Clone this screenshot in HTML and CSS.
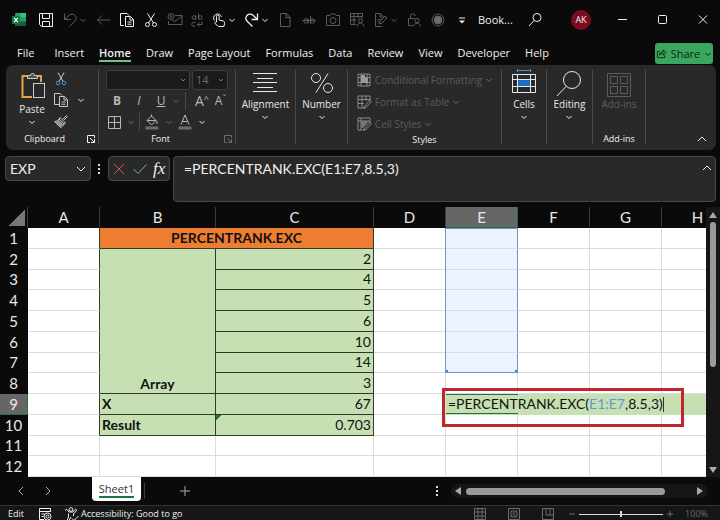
FILE: index.html
```
<!DOCTYPE html>
<html lang="en">
<head>
    <meta charset="UTF-8">
    <meta name="viewport" content="width=device-width, initial-scale=1.0">
    <title>Book - Excel</title>
    <link rel="stylesheet" href="styles.css">
</head>
<body>

    <!-- shared icon shapes -->
    <svg class="defs" aria-hidden="true">
        <symbol id="chev" viewBox="0 0 8 8"><path d="M1.500 3L4 5.500 6.500 3"/></symbol>
        <symbol id="launcher" viewBox="0 0 8 8"><path d="M7.500 3V.5H.5v7H3M3 3l4 4M7.500 4v3.500H4"/></symbol>
    </svg>

    <header class="titlebar">
        <svg class="icon logo" viewBox="0 0 16 16">
            <rect x="4" y="1" width="11" height="13" rx="1" fill="#21a366"/>
            <path d="M9.500 1H14a1 1 0 0 1 1 1v3H9.500z" fill="#33c481"/>
            <path d="M4 9.500h11V13a1 1 0 0 1-1 1H5a1 1 0 0 1-1-1z" fill="#185c37"/>
            <rect x="1" y="4" width="8" height="8" rx="1" fill="#107c41"/>
            <path d="M3.200 5.800l3.600 4.400M6.800 5.800l-3.600 4.400" stroke="#fff" stroke-width="1.200"/>
        </svg>
        <div class="quick">
            <button aria-label="Save"><svg class="icon" viewBox="0 0 16 16"><path d="M1.500 1.500h13v13H3.500l-2-2zM4.500 1.500v5h7v-5M4.500 14.500v-5h7v5"/></svg></button>
            <div class="split dim">
                <button aria-label="Undo"><svg class="icon" viewBox="0 0 16 16"><path d="M2.500 1.500v6h6M2.500 7.500L7 3.300c2-1.800 5-1.300 6.300.5 1.300 2 1 4-.5 5.500L7.500 14.500"/></svg></button>
                <button aria-label="Undo list"><svg class="chev"><use href="#chev"/></svg></button>
            </div>
            <button class="dim" aria-label="Back"><svg class="icon" viewBox="0 0 16 16"><path d="M15 8H2.500M7 3.500L2.500 8 7 12.500"/></svg></button>
            <button aria-label="Copy"><svg class="icon" viewBox="0 0 16 16"><path d="M5 13.500H1.500v-12H8l2 2M6.500 4.500h5l3 3v7h-8zM11 4.500V8h3.500M8.500 10h4M8.500 12.200h4"/></svg></button>
            <button aria-label="Cut"><svg class="icon" viewBox="0 0 16 16"><path d="M4.500 1.500l6 9.500M11.500 1.500L5.500 11"/><circle cx="4.500" cy="12.500" r="2"/><circle cx="11.500" cy="12.500" r="2"/></svg></button>
            <button class="dim" aria-label="Mail"><svg class="icon" viewBox="0 0 16 16"><path d="M8 3.500h7v9H1.500V9M5 8l3 1.500 7-5.500"/><circle cx="4" cy="4.500" r="3"/><circle cx="4" cy="4.500" r="1"/></svg></button>
            <button class="dim narrow" aria-label="Replace"><svg class="icon narrow" viewBox="0 0 12 16"><circle cx="3" cy="5.500" r="1.800"/><path d="M4.800 3.500v4M7.500 1.500v6"/><circle cx="9.300" cy="5.500" r="1.800"/><path d="M4.500 10.500H2.500a1.800 1.800 0 0 0 0 3.600h2M11 9.500v3H6.500M8.500 10.500l-2 2 2 2"/></svg></button>
            <div class="split">
                <button aria-label="Touch mode"><svg class="icon" viewBox="0 0 16 16"><path d="M3.500 8.500a4 4 0 1 1 7-3.500M5.500 10V4.500a1.300 1.300 0 0 1 2.600 0V8l4 1c1.300.3 1.600 1 1.400 2.200L13 14.500H7.500L4 11.500c-.5-1 .5-1.800 1.500-1.200"/></svg></button>
                <button aria-label="Touch mode list"><svg class="chev"><use href="#chev"/></svg></button>
            </div>
            <div class="split">
                <button aria-label="Redo"><svg class="icon" viewBox="0 0 16 16"><path stroke-width="1.300" d="M13.500 1.500v6h-6M13.500 7.500L9 3.300c-2-1.800-5-1.300-6.300.5-1.300 2-1 4 .5 5.500l5.300 5.200"/></svg></button>
                <button aria-label="Redo list"><svg class="chev"><use href="#chev"/></svg></button>
            </div>
            <button class="dim" aria-label="New"><svg class="icon" viewBox="0 0 16 16"><path d="M3.500 1.500h6l3.500 4v9H3.500zM9 1.500v4h4"/></svg></button>
            <button class="dim" aria-label="Strikethrough"><svg class="icon" viewBox="0 0 16 16"><circle cx="5" cy="9" r="2.200"/><path d="M7.200 6.500v5M9.500 4v7.500M1.500 8.500h13"/><circle cx="11.500" cy="9" r="2.200"/></svg></button>
            <button class="dim" aria-label="Camera"><svg class="icon" viewBox="0 0 16 16"><path d="M1.500 3.500H5l1-1.500h4l1 1.500h3.500v10h-13z"/><circle cx="8" cy="8.500" r="3"/></svg></button>
            <button class="dim" aria-label="Share table"><svg class="icon" viewBox="0 0 16 16"><path d="M7 12.500H1.500v-11h12v4M1.500 4.500h12M1.500 8h6M5 1.500v11M9 1.500V6"/><circle cx="11.500" cy="8.500" r="2"/><path d="M8 14.500c0-4.500 7-4.500 7 0"/></svg></button>
            <div class="split dim">
                <button aria-label="Edit file"><svg class="icon" viewBox="0 0 16 16"><path d="M9 14.500H2.500v-13h5l3 3M7 1.500v3.500h3M6 12l1-3 5-5 2 2-5 5zM4.500 7.500h3M4.500 9.500h1"/></svg></button>
                <button aria-label="Edit file list"><svg class="chev"><use href="#chev"/></svg></button>
            </div>
            <button class="dim" aria-label="Permissions"><svg class="icon" viewBox="0 0 16 16"><path d="M6.500 13.500h-4v-7h6M4.500 6.500V4a2.300 2.300 0 0 1 4.600 0"/><circle cx="11" cy="8.500" r="2.200"/><path d="M7.500 14.500c0-4.500 7-4.500 7 0"/></svg></button>
            <button class="dim" aria-label="Record"><svg class="icon" viewBox="0 0 16 16"><circle cx="8" cy="8" r="6"/><circle cx="8" cy="8" r="4" fill="#6d6d6d"/></svg></button>
            <button aria-label="Customize toolbar"><svg class="icon" viewBox="0 0 16 16"><path d="M5 6h6"/><path d="M5 8.500h6L8 11.500z" fill="#eee" stroke="none"/></svg></button>
        </div>
        <span class="doc">Book...</span>
        <div class="window">
            <button aria-label="Search"><svg class="icon" viewBox="0 0 16 16"><circle cx="10" cy="5.500" r="4"/><path d="M7 8.500L2 14"/></svg></button>
            <button class="avatar">AK</button>
            <button aria-label="Minimize"><svg class="icon" viewBox="0 0 16 16"><path d="M3 7.500h9"/></svg></button>
            <button aria-label="Maximize"><svg class="icon" viewBox="0 0 16 16"><rect x="3.500" y="3.500" width="8" height="8" rx="1"/></svg></button>
            <button aria-label="Close"><svg class="icon" viewBox="0 0 16 16"><path d="M4 3.500l8 8M12 3.500l-8 8"/></svg></button>
        </div>
    </header>

    <nav class="menu">
        <a href="#" class="file">File</a>
        <a href="#">Insert</a>
        <a href="#" class="active">Home</a>
        <a href="#">Draw</a>
        <a href="#">Page Layout</a>
        <a href="#">Formulas</a>
        <a href="#">Data</a>
        <a href="#">Review</a>
        <a href="#">View</a>
        <a href="#">Developer</a>
        <a href="#">Help</a>
        <button class="share">
            <svg viewBox="0 0 12 12"><path d="M4 4H1.500v6.500h8V8M3.500 8c.5-3 2-4 4.500-4V2l3 3-3 3V6C6 6 4.500 6.500 3.500 8z"/></svg>
            Share
            <svg class="chev"><use href="#chev"/></svg>
        </button>
    </nav>

    <section class="ribbon">
        <div class="group clipboard">
            <div class="tools">
                <button class="big">
                    <svg class="large" viewBox="0 0 26 28">
                        <path d="M8 4H3.500v21H13M18 4h4v6" stroke="#e8a33d" stroke-width="2"/>
                        <path d="M8.500 6.500V3.500h3a2 2 0 0 1 4 0h3v3z" fill="#555" stroke="#ccc"/>
                        <rect x="14.500" y="11.500" width="11" height="14" fill="#292929" stroke="#ccc"/>
                    </svg>
                    Paste
                    <svg class="chev"><use href="#chev"/></svg>
                </button>
                <div class="stack">
                    <button aria-label="Cut"><svg class="icon" viewBox="0 0 16 16"><path d="M5 1.500l5 9M11 1.500l-5 9"/><circle cx="5" cy="12" r="1.800" stroke="#3a96dd"/><circle cx="11" cy="12" r="1.800" stroke="#3a96dd"/></svg></button>
                    <div class="split wide">
                        <button aria-label="Copy"><svg class="icon" viewBox="0 0 16 16"><path d="M6 12.500H1.500v-11H7l2 2M6.500 4.500h5l3 3v7h-8zM11 4.500V8h3.500M8.500 10h4M8.500 12.200h4"/></svg></button>
                        <button aria-label="Copy list"><svg class="chev"><use href="#chev"/></svg></button>
                    </div>
                    <button aria-label="Format painter"><svg class="icon" viewBox="0 0 16 16"><path d="M10 6l3.500-3.500 1 1L11 7M7 4.500l5.500 5.500-1.500 1L6 6zM6 6C5 7.500 3.500 8.500 1.500 8.500l6 6c1.500-.5 3-2 3.500-3.500"/><path d="M2.500 9l3-2 5 4.500-3 2.500z" fill="#999" stroke="none"/></svg></button>
                </div>
            </div>
            <div class="caption">Clipboard<svg class="launcher"><use href="#launcher"/></svg></div>
        </div>

        <div class="group font">
            <div class="tools rows">
                <div class="row selects">
                    <select class="family" aria-label="Font"><option></option></select>
                    <select class="size" aria-label="Font size"><option>14</option></select>
                </div>
                <div class="row letters">
                    <button><b>B</b></button>
                    <button><i>I</i></button>
                    <button><u>U</u></button>
                    <button class="list" aria-label="Underline list"><svg class="chev faint"><use href="#chev"/></svg></button>
                    <span class="bar"></span>
                    <button class="grow">A<sup>^</sup></button>
                    <button class="shrink">A<sup>ˇ</sup></button>
                </div>
                <div class="row colors">
                    <div class="split wide"><button aria-label="Borders"><svg class="icon" viewBox="0 0 16 16"><path d="M2.500 2.500h12v12h-12zM8.500 2.500v12M2.500 8.500h12"/></svg></button><button aria-label="Borders list"><svg class="chev faint"><use href="#chev"/></svg></button></div>
                    <span class="bar"></span>
                    <div class="split wide"><button aria-label="Fill color"><svg class="icon" viewBox="0 0 16 16"><path d="M3 6.500l4.500-4.500 4.500 4.500L7.500 11zM7.500 2V.5M3.500 6.500h8M13 7v3"/><path d="M1.500 12.500h13v3h-13z" fill="#6d6d6d" stroke="none"/></svg></button><button aria-label="Fill list"><svg class="chev faint"><use href="#chev"/></svg></button></div>
                    <div class="split wide"><button aria-label="Font color"><svg class="icon" viewBox="0 0 16 16"><path d="M4 10.500L8 1l4 9.500M5.500 7.500h5"/><path d="M1.500 12.500h13v3h-13z" fill="#6d6d6d" stroke="none"/></svg></button><button aria-label="Font color list"><svg class="chev"><use href="#chev"/></svg></button></div>
                </div>
            </div>
            <div class="caption">Font<svg class="launcher faint"><use href="#launcher"/></svg></div>
        </div>

        <div class="group alignment">
            <button class="big">
                <svg class="large" viewBox="0 0 26 28"><path d="M1 4.500h24M5 9.500h16M1 13.500h24M5 18.500h16M1 22.500h24"/></svg>
                Alignment
                <svg class="chev"><use href="#chev"/></svg>
            </button>
        </div>

        <div class="group number">
            <button class="big">
                <svg class="large" viewBox="0 0 26 28"><circle cx="7" cy="9" r="4.500"/><circle cx="19" cy="19" r="4.500"/><path d="M19 4.500L7 23.500"/></svg>
                Number
                <svg class="chev"><use href="#chev"/></svg>
            </button>
        </div>

        <div class="group styles">
            <div class="tools rows">
                <button class="style">
                    <svg class="icon" viewBox="0 0 16 16"><path d="M2 2h12v12H2zM2 5.500h12M2 10.500h12M5 2v12M11 2v12"/><path d="M5 3h4v3h3v5H5z" fill="#999" stroke="none"/></svg>
                    Conditional Formatting
                    <svg class="chev"><use href="#chev"/></svg>
                </button>
                <button class="style">
                    <svg class="icon" viewBox="0 0 16 16"><path d="M9 14H2V2h12v4M2 5.500h12M2 9.500h6M6 2v12M10 2v5M8 13l6-7 1.500 1.500-6 6.500H8z"/></svg>
                    Format as Table
                    <svg class="chev"><use href="#chev"/></svg>
                </button>
                <button class="style">
                    <svg class="icon" viewBox="0 0 16 16"><path d="M9 14H2V2h12v4M2 5h12M5 2v12"/><path d="M5 5h8l-6 7H5z" fill="#777" stroke="none"/><path d="M8 13l6-7 1.500 1.500-6 6.500H8z"/></svg>
                    Cell Styles
                    <svg class="chev"><use href="#chev"/></svg>
                </button>
            </div>
            <div class="caption">Styles</div>
        </div>

        <div class="group cells">
            <button class="big">
                <svg class="large" viewBox="0 0 26 28">
                    <path d="M6.500 1.500h13M6.500 0v3M19.500 0v3" stroke="#3a96dd"/>
                    <path d="M7 11h12v6H7z" fill="#1a6fc4" stroke="none"/>
                    <path d="M1.500 5.500h23v18h-23zM1.500 10.500h23M1.500 17.500h23M6.500 5.500v18M19.500 5.500v18"/>
                </svg>
                Cells
                <svg class="chev"><use href="#chev"/></svg>
            </button>
        </div>

        <div class="group editing">
            <button class="big">
                <svg class="large" viewBox="0 0 26 28"><circle cx="16" cy="11" r="8.500"/><path d="M10 17.500L1 27"/></svg>
                Editing
                <svg class="chev"><use href="#chev"/></svg>
            </button>
        </div>

        <div class="group addins">
            <button class="big off">
                <svg class="large" viewBox="0 0 26 28"><path d="M1.500 4.500h23v23h-23zM4.500 7.500h7v7h-7zM14.500 7.500h7v7h-7zM4.500 17.500h7v7h-7zM14.500 17.500h7v7h-7z"/></svg>
                Add-ins
            </button>
            <div class="caption">Add-ins</div>
        </div>

        <button class="collapse" aria-label="Collapse ribbon"><svg class="up" viewBox="0 0 10 8"><path d="M1 6l4-4 4 4"/></svg></button>
    </section>

    <section class="formula-bar">
        <div class="name-box">
            <input type="text" value="EXP" aria-label="Name box">
            <svg class="up" viewBox="0 0 10 8"><path d="M1 2l4 4 4-4"/></svg>
        </div>
        <span class="dots"></span>
        <div class="actions">
            <button aria-label="Cancel"><svg class="icon" viewBox="0 0 16 16"><path d="M3 3l10 10M13 3L3 13" stroke="#d9544f"/></svg></button>
            <button aria-label="Enter"><svg class="icon" viewBox="0 0 16 16"><path d="M1.500 8l4.500 4.500 8.500-9" stroke="#5fc27e"/></svg></button>
            <button class="fx" aria-label="Insert function">fx</button>
        </div>
        <div class="formula">
            <textarea aria-label="Formula bar">=PERCENTRANK.EXC(E1:E7,8.5,3)</textarea>
            <button aria-label="Collapse formula bar"><svg class="up" viewBox="0 0 10 8"><path d="M1 6l4-4 4 4"/></svg></button>
        </div>
    </section>

    <main class="sheet">
        <div class="grid">
            <table>
                <colgroup>
                    <col class="rownum"><col class="std"><col class="col-b"><col class="col-c"><col class="std"><col class="std"><col class="std"><col class="std"><col class="std">
                </colgroup>
                <thead>
                    <tr><th class="corner"></th><th>A</th><th>B</th><th>C</th><th>D</th><th class="current">E</th><th>F</th><th>G</th><th>H</th></tr>
                </thead>
                <tbody>
                    <tr><th>1</th><td></td><td class="title" colspan="2">PERCENTRANK.EXC</td><td></td><td class="range top"></td><td></td><td></td><td></td></tr>
                    <tr><th>2</th><td></td><td class="data array" rowspan="7">Array</td><td class="data num">2</td><td></td><td class="range"></td><td></td><td></td><td></td></tr>
                    <tr><th>3</th><td></td><td class="data num">4</td><td></td><td class="range"></td><td></td><td></td><td></td></tr>
                    <tr><th>4</th><td></td><td class="data num">5</td><td></td><td class="range"></td><td></td><td></td><td></td></tr>
                    <tr><th>5</th><td></td><td class="data num">6</td><td></td><td class="range"></td><td></td><td></td><td></td></tr>
                    <tr><th>6</th><td></td><td class="data num">10</td><td></td><td class="range"></td><td></td><td></td><td></td></tr>
                    <tr><th>7</th><td></td><td class="data num">14</td><td></td><td class="range bottom"></td><td></td><td></td><td></td></tr>
                    <tr><th>8</th><td></td><td class="data num">3</td><td></td><td></td><td></td><td></td><td></td></tr>
                    <tr><th class="current">9</th><td></td><td class="data name">X</td><td class="data num">67</td><td></td><td class="editing-cell" colspan="4">=PERCENTRANK.EXC(<span class="ref">E1:E7</span>,8.5,3)<span class="caret"></span><span class="marker"></span></td></tr>
                    <tr><th>10</th><td></td><td class="data name">Result</td><td class="data num flag">0.703</td><td></td><td></td><td></td><td></td><td></td></tr>
                    <tr><th>11</th><td></td><td></td><td></td><td></td><td></td><td></td><td></td><td></td></tr>
                    <tr><th>12</th><td></td><td></td><td></td><td></td><td></td><td></td><td></td><td></td></tr>
                </tbody>
            </table>
        </div>
        <div class="vscroll">
            <svg viewBox="0 0 8 8"><path d="M4 1l4 6H0z"/></svg>
            <span class="vthumb"></span>
            <svg viewBox="0 0 8 8"><path d="M4 7l4-6H0z"/></svg>
        </div>
    </main>

    <div class="tabs">
        <button aria-label="Previous sheet"><svg viewBox="0 0 10 10"><path d="M7 1L3 5l4 4"/></svg></button>
        <button aria-label="Next sheet"><svg viewBox="0 0 10 10"><path d="M3 1l4 4-4 4"/></svg></button>
        <button class="tab"><span>Sheet1</span></button>
        <span class="tab-end"></span>
        <button class="add" aria-label="New sheet"><svg viewBox="0 0 10 10"><path d="M5 0v10M0 5h10"/></svg></button>
        <span class="dots"></span>
        <div class="hscroll">
            <svg viewBox="0 0 8 8"><path d="M1 4l6-4v8z"/></svg>
            <span class="hthumb"></span>
            <svg viewBox="0 0 8 8"><path d="M7 4L1 0v8z"/></svg>
        </div>
    </div>

    <footer class="status">
        <span class="mode">Edit</span>
        <svg class="icon" viewBox="0 0 16 16"><path d="M7 13.500H2.500v-11h11V6M2.500 5.500h11M4.500 8h3M4.500 10.500h2"/><circle cx="10.500" cy="10.500" r="3.500"/><circle cx="10.500" cy="10.500" r="1.500"/></svg>
        <button class="access">
            <svg class="icon" viewBox="0 0 16 16"><circle cx="6" cy="3.500" r="1.800"/><path d="M.5 4.500c0-1.500 1.500-1.500 2-.5l1.500 2h4l1.500-2c.5-1 2-1 2 .5L8.500 8v2M3.500 7.500V11L2 14.500h2l2-3.500M7 12.500l2 2 4.500-4.500"/></svg>
            Accessibility: Good to go
        </button>
        <div class="views">
            <button aria-label="Normal view"><svg viewBox="0 0 12 12"><path d="M.5.5h11v11H.5zM.5 4h11M.5 8h11M4 .5v11M8 .5v11"/></svg></button>
            <button aria-label="Page layout view"><svg viewBox="0 0 12 12"><path d="M.5.5h11v11H.5zM3 3h6v6H3zM4.500 5h3M4.500 7h3"/></svg></button>
            <button aria-label="Page break view"><svg viewBox="0 0 12 12"><path d="M.5.5h11v11H.5zM4 .5V7h4V.5M8 7h3.500"/></svg></button>
        </div>
        <div class="zoom">
            <button aria-label="Zoom out"><svg viewBox="0 0 8 8"><path d="M1 4h6"/></svg></button>
            <input type="range" min="10" max="190" value="100" aria-label="Zoom">
            <button aria-label="Zoom in"><svg viewBox="0 0 8 8"><path d="M1 4h6M4 1v6"/></svg></button>
            <span>100%</span>
        </div>
    </footer>

</body>
</html>
```
FILE: styles.css
```
* {
    box-sizing: border-box;
}

body {
    margin: 0;
    height: 100vh;
    display: flex;
    flex-direction: column;
    background-color: #0a0a0a;
    color: #f0f0f0;
    font-family: "Open Sans", "Noto Sans", sans-serif;
    font-size: 11px;
    line-height: 14px;
    overflow: hidden;
}

button {
    display: flex;
    align-items: center;
    justify-content: center;
    padding: 0;
    border: none;
    background: none;
    color: inherit;
    font: inherit;
    cursor: pointer;
}

svg {
    display: block;
    flex: none;
    fill: none;
    stroke: currentColor;
    stroke-width: 1;
}

.defs {
    position: absolute;
    width: 0;
    height: 0;
}

.icon {
    width: 16px;
    height: 16px;
}

.icon.narrow {
    width: 12px;
}

.chev {
    width: 8px;
    height: 8px;
    color: #f0f0f0;
}

.dim,
.dim .chev {
    color: #5c5c5c;
}

.faint {
    color: #6d6d6d;
}

.split {
    display: flex;
    align-items: center;
    gap: 1px;
}

/* title bar */
.titlebar {
    display: flex;
    align-items: center;
    height: 40px;
    flex: none;
    padding: 0 9px 0 11px;
}

.logo {
    margin-right: 11px;
    stroke: none;
}

.quick {
    display: flex;
    align-items: center;
    gap: 8px;
}

.doc {
    margin-left: 8px;
}

.window {
    display: flex;
    align-items: center;
    gap: 24px;
    margin-left: auto;
}

.avatar {
    width: 20px;
    height: 20px;
    margin-left: 4px;
    border-radius: 50%;
    background-color: #7a0c20;
    font-size: 9px;
}

/* menu */
.menu {
    display: flex;
    align-items: center;
    gap: 15px;
    height: 25px;
    flex: none;
    padding: 2px 7px 0 17px;
    font-size: 11px;
}

.menu a {
    border-bottom: 2px solid transparent;
    color: inherit;
    text-decoration: none;
    white-space: nowrap;
}

.menu .file {
    margin-right: 5px;
}

.menu .active {
    border-color: #6fc28b;
    font-weight: 600;
}

.share {
    gap: 4px;
    width: 58px;
    height: 21px;
    margin-left: auto;
    border-radius: 3px;
    background-color: #3aa660;
    color: #0a2a15;
}

.share svg {
    width: 11px;
    height: 11px;
}

.share .chev {
    width: 8px;
    height: 8px;
    color: #0a2a15;
}

/* ribbon */
.ribbon {
    display: flex;
    height: 85px;
    flex: none;
    margin: 0 4px 0 6px;
    padding: 4px 0 6px;
    border-radius: 7px;
    background-color: #292929;
    font-size: 10px;
}

.group {
    display: flex;
    flex-direction: column;
    align-items: center;
    flex: none;
    border-right: 1px solid #4a4a4a;
}

.clipboard { width: 93px; }
.font { width: 137px; }
.alignment { width: 60px; }
.number { width: 52px; }
.styles { width: 154px; }
.cells { width: 45px; }
.editing { width: 46px; }
.addins { width: 53px; }

.caption {
    display: flex;
    justify-content: center;
    align-items: center;
    width: 100%;
    margin-top: auto;
    font-size: 9px;
    line-height: 10px;
}

.launcher {
    width: 8px;
    height: 8px;
}

.clipboard .launcher {
    margin: 0 3px 0 22px;
}

.clipboard .caption {
    justify-content: flex-end;
}

.font .caption {
    justify-content: flex-end;
}

.font .launcher {
    margin: 0 3px 0 54px;
}

.big {
    flex-direction: column;
    color: #e8e8e8;
}

.big .large {
    width: 26px;
    height: 28px;
}

.big .chev {
    margin-top: 2px;
}

.clipboard .large {
    margin-bottom: 2px;
}

.big.off {
    color: #5c5c5c;
}

.tools {
    display: flex;
    gap: 8px;
}

.rows {
    flex-direction: column;
    gap: 0;
}

.stack {
    display: flex;
    flex-direction: column;
    align-items: flex-start;
    gap: 5px;
    padding-top: 2px;
    color: #c8c8c8;
}

.wide {
    gap: 5px;
}

.clipboard .wide {
    gap: 8px;
}

.row {
    display: flex;
    align-items: center;
    height: 21px;
    color: #b8b8b8;
}

.selects {
    gap: 2px;
}

.selects select {
    height: 20px;
    padding: 0 3px;
    border: 1px solid #3d3d3d;
    border-radius: 3px;
    appearance: none;
    background: #1b1b1b url("data:image/svg+xml,%3Csvg xmlns='http://www.w3.org/2000/svg' width='8' height='8'%3E%3Cpath d='M2 3l2 2 2-2' fill='none' stroke='%23777'/%3E%3C/svg%3E") no-repeat right 2px center;
    color: #6d6d6d;
    font: inherit;
    font-size: 11px;
}

.family { width: 84px; }
.size { width: 36px; }

.letters {
    font-size: 12px;
}

.letters button {
    width: 22px;
}

.letters .list {
    width: 8px;
}

.letters .bar {
    margin: 0 5px;
}

.letters .grow {
    font-size: 14px;
}

.letters .shrink {
    width: 15px;
}

.letters sup {
    margin-bottom: 4px;
    font-size: 9px;
    line-height: 9px;
}

.bar {
    width: 1px;
    height: 18px;
    background-color: #4a4a4a;
}

.colors {
    gap: 4px;
}

.style {
    gap: 3px;
    height: 22px;
    justify-content: flex-start;
    color: #5c5c5c;
    white-space: nowrap;
}

.style .icon {
    color: #8a8a8a;
}

.style .chev {
    color: #6d6d6d;
}

.up {
    width: 10px;
    height: 8px;
}

.collapse {
    align-self: flex-end;
    margin: 0 9px 1px auto;
}

/* formula bar */
.formula-bar {
    display: flex;
    align-items: flex-start;
    height: 57px;
    flex: none;
    padding: 6px 4px 5px 5px;
    font-family: Lato, "Open Sans", sans-serif;
    font-size: 14px;
}

.name-box,
.actions,
.formula {
    display: flex;
    align-items: center;
    border: 1px solid #484848;
    border-radius: 4px;
    background-color: #292929;
}

.name-box {
    width: 86px;
    height: 25px;
    padding: 0 4px;
}

.name-box input {
    width: 100%;
    min-width: 0;
    padding: 0;
    border: none;
    background: none;
    color: inherit;
    font: inherit;
}

.dots {
    width: 2px;
    height: 10px;
    background: repeating-linear-gradient(#ddd 0 2px, transparent 2px 4px);
}

.formula-bar .dots {
    margin: 8px 8px 0 7px;
}

.actions {
    gap: 5px;
    width: 62px;
    height: 25px;
    padding: 0 2px;
}

.fx {
    font-family: "Liberation Serif", serif;
    font-style: italic;
    font-size: 17px;
}

.formula {
    flex: 1;
    align-items: flex-start;
    height: 46px;
    margin-left: 3px;
    padding: 3px 3px 3px 10px;
}

.formula textarea {
    flex: 1;
    height: 36px;
    padding: 0;
    border: none;
    outline: none;
    resize: none;
    background: none;
    color: inherit;
    font: inherit;
    line-height: 18px;
}

.formula button {
    padding-top: 4px;
}

/* sheet */
.sheet {
    display: flex;
    flex: 1;
    min-height: 0;
}

.grid {
    flex: 1;
    min-width: 0;
    overflow: hidden;
}

table {
    width: 734px;
    height: 100%;
    table-layout: fixed;
    border-spacing: 0;
    background-color: #fff;
    color: #111;
    font-family: Lato, "Open Sans", sans-serif;
    font-size: 14px;
    line-height: 18px;
}

.rownum { width: 28px; }
.std { width: 72px; }
.col-b { width: 116px; }
.col-c { width: 158px; }

th,
td {
    padding: 0;
    border-right: 1px solid #dcdcdc;
    border-bottom: 1px solid #dcdcdc;
    white-space: nowrap;
}

th {
    border-color: #0a0a0a;
    background-color: #0a0a0a;
    color: #e8e8e8;
    font-size: 15px;
    font-weight: normal;
}

thead th {
    height: 21px;
    border-right-color: #3d3d3d;
}

.corner {
    background: linear-gradient(135deg, transparent 50%, #777 50%) no-repeat 9px 3px / 16px 16px #0a0a0a;
}

th.current {
    border-color: #2c6b49;
    background-color: #666;
}

/* left edge of the filled block */
tbody tr:nth-child(-n+10) td:nth-child(2) {
    border-right-color: #303a2a;
}

.title {
    border-color: #3a3a2a;
    background-color: #ed7d31;
    font-weight: bold;
    text-align: center;
}

.data {
    border-color: #303a2a;
    background-color: #c6e0b4;
}

.array {
    font-weight: bold;
    text-align: center;
    vertical-align: bottom;
}

.name {
    padding-left: 2px;
    font-weight: bold;
}

.num {
    padding-right: 2px;
    text-align: right;
}

.flag {
    background: linear-gradient(135deg, #1a7a2a 4px, #c6e0b4 4px);
}

.range {
    border-right: 1px solid #6f94c8;
    border-bottom-color: #d3deed;
    background-color: #ecf3fe;
    box-shadow: -1px 0 #6f94c8;
}

.range.top {
    background-image: linear-gradient(#6f94c8, #6f94c8);
    background-repeat: no-repeat;
    background-size: 100% 1px;
}

/* resize handles in the lower corners */
.range.bottom {
    border-bottom-color: #6f94c8;
    background: linear-gradient(#4f7fc0, #4f7fc0) no-repeat 0 100% / 2px 2px,
        linear-gradient(#4f7fc0, #4f7fc0) no-repeat 100% 100% / 2px 2px #ecf3fe;
}

.editing-cell {
    position: relative;
    padding-left: 2px;
    border-bottom-color: #c6e0b4;
    background: linear-gradient(#217346, #217346) no-repeat 0 0 / 72px 1px,
        linear-gradient(#217346, #217346) no-repeat 0 100% / 72px 1px #c6e0b4;
}

.ref {
    color: #5b9bd5;
}

.caret {
    display: inline-block;
    width: 1px;
    height: 15px;
    background-color: #333;
    vertical-align: text-bottom;
}

/* red callout drawn over the edited cell */
.marker {
    position: absolute;
    top: -6px;
    left: -4px;
    width: 242px;
    height: 39px;
    border: 3px solid #c0272d;
}

.vscroll {
    display: flex;
    flex-direction: column;
    align-items: center;
    gap: 3px;
    width: 14px;
    padding: 4px 0 3px;
    background-color: #161616;
}

.vscroll svg,
.hscroll svg {
    width: 8px;
    height: 8px;
    fill: #aaa;
    stroke: none;
}

.vthumb {
    width: 6px;
    height: 145px;
    margin-bottom: auto;
    border-radius: 3px;
    background-color: #9a9a9a;
}

/* sheet tabs */
.tabs {
    display: flex;
    align-items: center;
    height: 28px;
    flex: none;
    padding: 0 12px 0 16px;
    color: #aaa;
}

.tabs button svg {
    width: 10px;
    height: 10px;
}

.tabs button + button {
    margin-left: 17px;
}

.tabs .tab {
    align-self: flex-start;
    width: 49px;
    height: 24px;
    margin-left: 39px;
    border-radius: 0 0 4px 4px;
    background-color: #fff;
    color: #333;
    font-size: 11px;
}

.tab span {
    border-bottom: 2px solid #217346;
    line-height: 15px;
}

.tab-end {
    width: 1px;
    height: 16px;
    margin-left: 3px;
    background-color: #3d3d3d;
}

.tabs .add {
    margin-left: 35px;
}

.tabs .dots {
    margin-left: auto;
}

.hscroll {
    display: flex;
    align-items: center;
    gap: 4px;
    width: 257px;
    height: 14px;
    margin-left: 13px;
    padding: 0 4px 0 3px;
    border-radius: 7px;
    background-color: #161616;
}

.hthumb {
    width: 199px;
    height: 7px;
    margin-right: auto;
    border-radius: 4px;
    background-color: #9a9a9a;
}

/* status bar */
.status {
    display: flex;
    align-items: center;
    height: 15px;
    flex: none;
    padding: 2px 12px 0 8px;
    border-top: 1px solid #333;
    background-color: #161616;
    font-size: 9px;
}

.mode {
    margin-right: 13px;
}

.access {
    margin-left: 12px;
}

.views {
    display: flex;
    gap: 22px;
    margin-left: auto;
    color: #6d6d6d;
}

.views svg {
    width: 12px;
    height: 12px;
}

.zoom {
    display: flex;
    align-items: center;
    gap: 3px;
    margin-left: 14px;
    color: #6d6d6d;
}

.zoom svg {
    width: 8px;
    height: 8px;
}

.zoom span {
    margin-left: 8px;
}

.zoom input {
    width: 84px;
    height: 8px;
    margin: 0;
    appearance: none;
    background: linear-gradient(#ddd, #ddd) no-repeat center / 100% 1px;
}

.zoom input::-webkit-slider-thumb {
    appearance: none;
    width: 2px;
    height: 6px;
    background-color: #ddd;
}
```
